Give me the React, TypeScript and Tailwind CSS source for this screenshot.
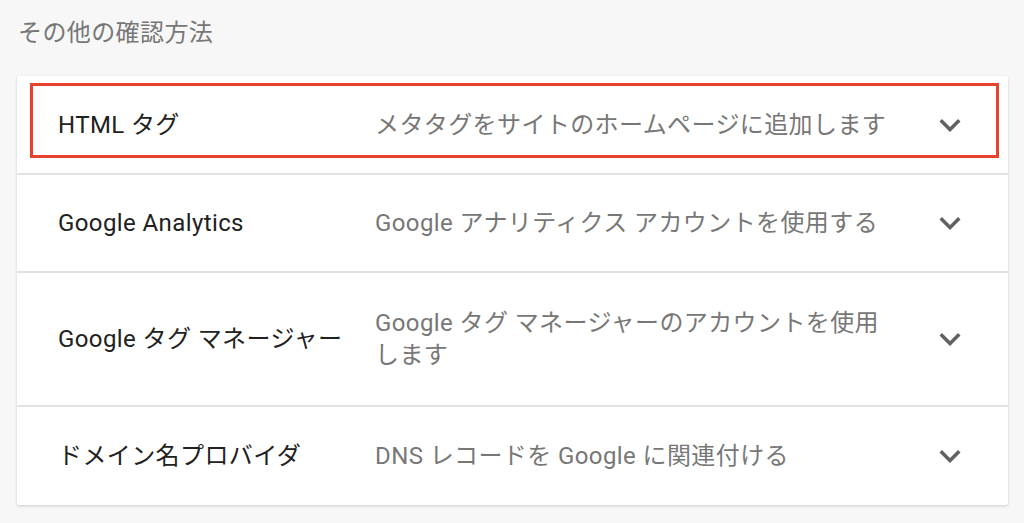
const rows = [
  { title: "HTML タグ", desc: "メタタグをサイトのホームページに追加します", h: "h-[97px]" },
  { title: "Google Analytics", desc: "Google アナリティクス アカウントを使用する", h: "h-[98px]" },
  { title: "Google タグ マネージャー", desc: "Google タグ マネージャーのアカウントを使用します", h: "h-[134px]" },
  { title: "ドメイン名プロバイダ", desc: "DNS レコードを Google に関連付ける", h: "h-[100px]" },
];

const ExpandMore = () => (
  <svg viewBox="0 0 24 24" className="ml-[29px] h-[42px] w-[42px] shrink-0 fill-[#616161]">
    <path d="M16.59 8.59 12 13.17 7.41 8.59 6 10l6 6 6-6z" />
  </svg>
);

export default function App() {
  return (
    <div
      className="h-[523px] w-[1024px] overflow-hidden bg-[#f7f7f7] tracking-[0.4px]"
      style={{ fontFamily: 'Roboto, "Noto Sans CJK JP", sans-serif' }}
    >
      <div className="px-[18px] pt-[17px] text-[24px] leading-[32px] text-[#777]">
        その他の確認方法
      </div>
      <div className="relative ml-[17px] mt-[27px] w-[991px] rounded-[2px] bg-white shadow-[0_1px_3px_rgba(0,0,0,0.18)]">
        {rows.map((r, i) => (
          <div
            key={r.title}
            className={`flex items-center ${r.h} ${i > 0 ? "border-t-2 border-[#e2e2e2]" : ""}`}
          >
            <div className="w-[358px] shrink-0 pl-[41px] text-[24px] leading-[32px] text-[#212121]">
              {r.title}
            </div>
            <div className="w-[525px] shrink-0 text-[24px] leading-[32px] text-[#777]">
              {r.desc}
            </div>
            <ExpandMore />
          </div>
        ))}
        <div className="pointer-events-none absolute left-[13px] top-[7px] h-[75px] w-[969px] border-[3px] border-[#e8412f]" />
      </div>
    </div>
  );
}
